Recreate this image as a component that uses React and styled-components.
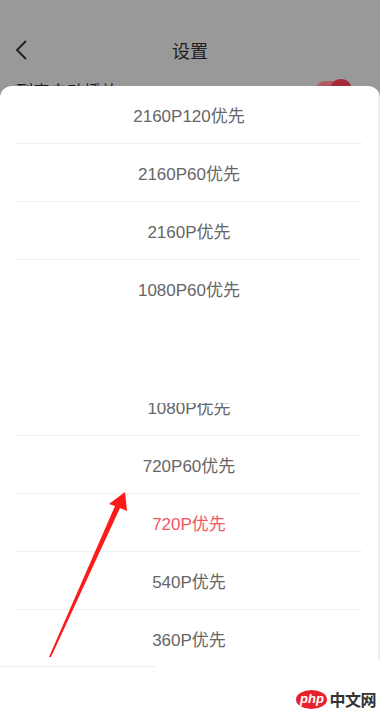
import React from "react";
import styled, { createGlobalStyle } from "styled-components";

const Global = createGlobalStyle`
  html, body { margin: 0; padding: 0; }
  body {
    width: 380px;
    height: 713px;
    overflow: hidden;
    background: #999999;
    font-family: "Liberation Sans", "Noto Sans CJK SC", sans-serif;
  }
`;

const Page = styled.div`
  position: relative;
  width: 380px;
  height: 713px;
  display: flex;
  flex-direction: column;
  background: #999999;
  overflow: hidden;
`;

const Header = styled.div`
  height: 86px;
  flex: none;
  overflow: hidden;
  display: flex;
  flex-direction: column;
  padding-top: 28px;
  box-sizing: border-box;
`;

const NavBar = styled.div`
  height: 44px;
  flex: none;
  display: grid;
  grid-template-columns: 60px 1fr 60px;
  align-items: center;
`;

const Back = styled.div`
  padding-left: 14px;
  display: flex;
  align-items: center;
`;

const Title = styled.div`
  text-align: center;
  font-size: 18px;
  color: #1e1e1e;
  font-family: "Noto Sans CJK SC", sans-serif;
`;

const SettingRow = styled.div`
  height: 34px;
  flex: none;
  display: flex;
  align-items: center;
  justify-content: space-between;
  padding: 0 30px 0 16px;
  margin-top: 1px;
`;

const SettingLabel = styled.span`
  font-size: 17px;
  color: #1e1e1e;
  font-family: "Noto Sans CJK SC", sans-serif;
`;

const Toggle = styled.div`
  position: relative;
  width: 34px;
  height: 18px;
  border-radius: 9px;
  background: #b25a62;
`;

const Knob = styled.div`
  position: absolute;
  right: -2px;
  top: -2px;
  width: 22px;
  height: 22px;
  border-radius: 50%;
  background: #a42a38;
`;

const Sheet = styled.div`
  flex: 1;
  display: flex;
  background: #ffffff;
  border-radius: 12px 12px 0 0;
  overflow: hidden;
`;

const SheetBody = styled.div`
  flex: 1;
  display: flex;
  flex-direction: column;
`;

const ScrollTrack = styled.div`
  width: 2px;
  height: 574px;
  flex: none;
  background: #ececec;
`;

const Group = styled.div`
  display: flex;
  flex-direction: column;
`;

const Option = styled.div`
  height: 57px;
  display: flex;
  align-items: center;
  justify-content: center;
  margin: 0 16px;
  font-size: 17px;
  color: ${(p) => (p.$active ? "#f25565" : "#666666")};
  border-bottom: ${(p) => (p.$last ? "none" : "1px solid #f0f0f0")};
  ${(p) => (p.$last ? "" : "height: 58px; box-sizing: border-box;")}
`;

const Spacer = styled.div`
  height: 86px;
  flex: none;
`;

const Viewport = styled.div`
  height: 263px;
  flex: none;
  overflow: hidden;
`;

const ScrolledList = styled.div`
  margin-top: -25px;
  display: flex;
  flex-direction: column;
`;

const BottomLine = styled.div`
  width: 155px;
  height: 1px;
  background: #eeeeee;
  flex: none;
`;

const Footer = styled.div`
  flex: 1;
  display: flex;
  justify-content: flex-end;
  align-items: flex-end;
  padding: 0 2px 2px 0;
`;

const Watermark = styled.div`
  display: flex;
  align-items: center;
  gap: 2px;
`;

const PhpBadge = styled.div`
  width: 31px;
  height: 19px;
  border-radius: 50%;
  background: #e8222d;
  color: #ffffff;
  font-size: 13px;
  font-weight: bold;
  font-style: italic;
  display: flex;
  align-items: center;
  justify-content: center;
  line-height: 1;
  padding-bottom: 2px;
  box-sizing: border-box;
  font-family: "Liberation Sans", sans-serif;
`;

const WatermarkText = styled.span`
  font-size: 16px;
  color: #333333;
  font-weight: bold;
  font-family: "Noto Sans CJK SC", sans-serif;
  letter-spacing: -0.5px;
`;

const Annotation = styled.svg`
  position: absolute;
  left: 0;
  top: 0;
  pointer-events: none;
`;

const group1 = ["2160P120优先", "2160P60优先", "2160P优先", "1080P60优先"];
const group2 = ["1080P优先", "720P60优先", "720P优先", "540P优先", "360P优先"];

export default function App() {
  return (
    <>
      <Global />
      <Page>
        <Header>
          <NavBar>
            <Back>
              <svg width="16" height="22" viewBox="0 0 16 22">
                <polyline points="12,2 3,11 12,20" fill="none" stroke="#1e1e1e" strokeWidth="1.8" />
              </svg>
            </Back>
            <Title>设置</Title>
            <div />
          </NavBar>
          <SettingRow>
            <SettingLabel>列表自动播放</SettingLabel>
            <Toggle>
              <Knob />
            </Toggle>
          </SettingRow>
        </Header>
        <Sheet>
          <SheetBody>
            <Group>
              {group1.map((t, i) => (
                <Option key={t} $last={i === group1.length - 1}>
                  {t}
                </Option>
              ))}
            </Group>
            <Spacer />
            <Viewport>
              <ScrolledList>
                {group2.map((t) => (
                  <Option key={t} $active={t === "720P优先"}>
                    {t}
                  </Option>
                ))}
              </ScrolledList>
            </Viewport>
            <BottomLine />
            <Footer>
              <Watermark>
                <PhpBadge>php</PhpBadge>
                <WatermarkText>中文网</WatermarkText>
              </Watermark>
            </Footer>
          </SheetBody>
          <ScrollTrack />
        </Sheet>
        <Annotation width="380" height="713" viewBox="0 0 380 713">
          <polygon
            points="49,657 51,657 120,508 127,511 125,492 109,504 115,506"
            fill="#ff1a1a"
          />
        </Annotation>
      </Page>
    </>
  );
}
